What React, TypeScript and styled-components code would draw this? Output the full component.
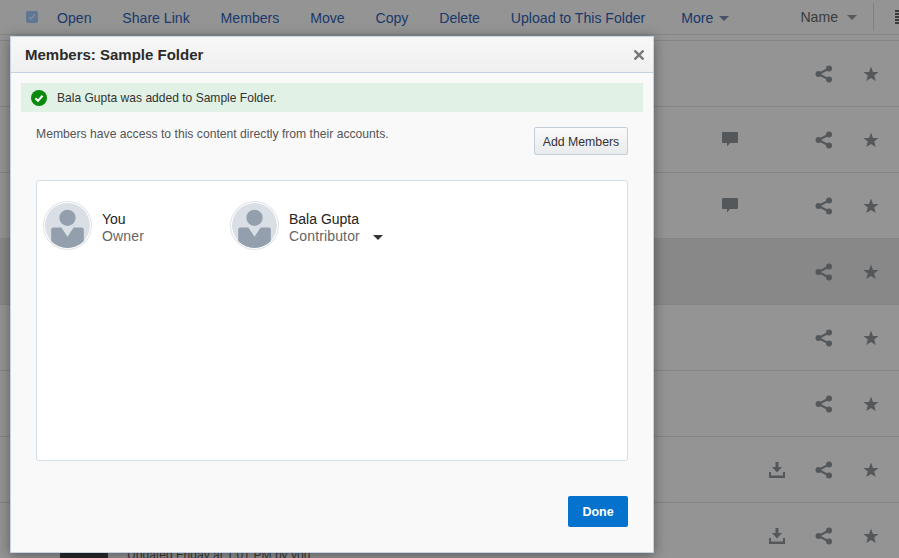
import React from 'react';
import styled, { createGlobalStyle } from 'styled-components';

const GlobalStyle = createGlobalStyle`
  html, body {
    margin: 0;
    padding: 0;
    height: 100%;
    overflow: hidden;
    background: #fff;
    font-family: "Liberation Sans", Arial, sans-serif;
  }
`;

const Page = styled.div`
  position: relative;
  width: 899px;
  height: 558px;
  overflow: hidden;
  background: #fff;
`;

const Toolbar = styled.div`
  display: flex;
  align-items: center;
  height: 35px;
  box-sizing: border-box;
  padding-left: 26px;
  border-bottom: 1px solid #e5e5e5;
  font-size: 14.1px;
`;

const Checkbox = styled.span`
  display: flex;
  align-items: center;
  justify-content: center;
  width: 12px;
  height: 12px;
  margin-right: 19px;
  border-radius: 2px;
  background: #a4ccff;
`;

const ToolLink = styled.a<{ $spaced?: boolean }>`
  display: flex;
  align-items: center;
  gap: 6px;
  margin-right: 30.85px;
  margin-left: ${({ $spaced }) => ($spaced ? '5px' : '0')};
  padding-top: 2px;
  color: #2f63b8;
  white-space: nowrap;
`;

const Caret = styled.span<{ $color?: string; $drop?: number }>`
  width: 0;
  height: 0;
  margin-top: ${({ $drop }) => $drop || 0}px;
  border-left: 5px solid transparent;
  border-right: 5px solid transparent;
  border-top: 5px solid ${({ $color }) => $color || '#7c90b8'};
`;

const Sort = styled.div`
  display: flex;
  align-items: center;
  gap: 9px;
  margin-left: auto;
  height: 28px;
  padding-right: 16px;
  border-right: 1px solid #dcdcdc;
  color: #666;
`;

const Dots = styled.div`
  display: flex;
  flex-direction: column;
  gap: 1px;
  margin-left: 21px;
`;

const Dot = styled.span`
  width: 4px;
  height: 2px;
  background: #666;
`;

const List = styled.div`
  margin-top: 5px;
  border-top: 1px solid #e5e5e5;
`;

const Row = styled.div<{ $active?: boolean }>`
  display: flex;
  align-items: center;
  height: 65px;
  padding-left: 60px;
  border-bottom: 1px solid #e5e5e5;
  background: ${({ $active }) => ($active ? '#ebebeb' : '#fff')};
`;

const Thumb = styled.div`
  width: 48px;
  height: 48px;
  margin: 9px 19px 0 0;
  background: #45494e;
`;

const Updated = styled.div`
  margin-top: 39px;
  font-size: 12.1px;
  line-height: 16px;
  color: #666;
  white-space: nowrap;
`;

const RowActions = styled.div`
  display: grid;
  grid-template-columns: repeat(4, 18px);
  column-gap: 29px;
  align-items: center;
  justify-items: center;
  margin-left: auto;
  margin-right: 19px;
`;

const IconSvg = styled.svg<{ $column: number }>`
  display: block;
  grid-column: ${({ $column }) => $column};
  fill: #92989d;
`;

const ShareIcon = () => (
  <IconSvg $column={3} width="18" height="18" viewBox="0 0 18 18">
    <circle cx="14" cy="3.5" r="3" />
    <circle cx="14" cy="14.5" r="3" />
    <circle cx="3.5" cy="9" r="3" />
    <path d="M3.5 9 14 3.5M3.5 9 14 14.5" stroke="#92989d" strokeWidth="2" fill="none" />
  </IconSvg>
);

const StarIcon = () => (
  <IconSvg $column={4} width="16" height="16" viewBox="0 0 16 16">
    <path d="M8 .6 10 5.9 15.6 6.1 11.2 9.6 12.7 15 8 11.9 3.3 15 4.8 9.6.4 6.1 6 5.9Z" />
  </IconSvg>
);

const CommentIcon = () => (
  <IconSvg $column={1} width="16" height="15" viewBox="0 0 16 15">
    <path d="M1 0h14a1 1 0 0 1 1 1v9a1 1 0 0 1-1 1H8l-3 3.5V11H1a1 1 0 0 1-1-1V1a1 1 0 0 1 1-1Z" />
  </IconSvg>
);

const DownloadIcon = () => (
  <IconSvg $column={2} width="16" height="16" viewBox="0 0 16 16">
    <path d="M6.5 0h3v5H13L8 10.5 3 5h3.5Z" />
    <path d="M0 10h2v3.5h12V10h2v6H0Z" />
  </IconSvg>
);

const Scrim = styled.div`
  position: absolute;
  inset: 0;
  background: rgba(0, 0, 0, 0.42);
`;

const Modal = styled.div`
  position: absolute;
  left: 10px;
  top: 36px;
  display: flex;
  flex-direction: column;
  width: 644px;
  height: 517px;
  box-sizing: border-box;
  border: 1px solid #c7d3e2;
  background: #f9f9f9;
  box-shadow: 0 2px 12px rgba(0, 0, 0, 0.4);
`;

const ModalHeader = styled.div`
  display: flex;
  align-items: center;
  justify-content: space-between;
  height: 36px;
  flex: none;
  box-sizing: border-box;
  padding: 0 9px 0 14px;
  border-bottom: 1px solid #c3d2e2;
  background: linear-gradient(#f7f7f7, #f0f0f0);
`;

const ModalTitle = styled.h1`
  margin: 0;
  font-size: 15px;
  font-weight: bold;
  color: #2b2b2b;
`;

const Close = styled.svg`
  display: block;
  stroke: #77797c;
  stroke-width: 2.4;
`;

const Banner = styled.div`
  display: flex;
  align-items: center;
  gap: 10px;
  height: 29px;
  margin: 10px 10px 0 10px;
  padding-left: 10px;
  background: #e1f1e5;
  font-size: 12.05px;
  color: #333;
`;

const Intro = styled.div`
  display: flex;
  justify-content: space-between;
  align-items: flex-start;
  margin: 15px 25px 0 25px;
  font-size: 12.17px;
  color: #555;
`;

const IntroText = styled.p`
  margin: 0;
  line-height: 14px;
`;

const AddButton = styled.button`
  width: 94px;
  height: 28px;
  padding: 2px 0 0;
  border: 1px solid #c4ced9;
  border-radius: 2px;
  background: linear-gradient(#fafafa, #e9eaec);
  font-family: inherit;
  font-size: 12.3px;
  color: #333;
`;

const MembersBox = styled.div`
  display: flex;
  align-items: flex-start;
  height: 281px;
  box-sizing: border-box;
  margin: 25px 25px 0 25px;
  padding: 20px 0 0 6px;
  border: 1px solid #d4deea;
  border-radius: 3px;
  background: #fff;
`;

const Member = styled.div`
  display: flex;
  align-items: center;
  gap: 10px;
  width: 187px;
`;

const Avatar = styled.svg`
  display: block;
  flex: none;
`;

const MemberInfo = styled.div`
  display: flex;
  flex-direction: column;
  margin-top: 4px;
  font-size: 14px;
  line-height: 17px;
`;

const MemberName = styled.span`
  color: #222;
`;

const MemberRole = styled.span`
  display: flex;
  align-items: center;
  gap: 13px;
  color: #666;
  letter-spacing: 0.15px;
`;

const Footer = styled.div`
  display: flex;
  justify-content: flex-end;
  margin: 35px 25px 0 0;
`;

const DoneButton = styled.button`
  width: 60px;
  height: 31px;
  padding: 0;
  border: none;
  border-radius: 2px;
  background: #0572ce;
  font-family: inherit;
  font-size: 12.5px;
  font-weight: bold;
  color: #fff;
`;

const MemberAvatar = () => (
  <Avatar width="49" height="49" viewBox="0 0 48 48">
    <defs>
      <clipPath id="avatar-clip">
        <circle cx="24" cy="24" r="22" />
      </clipPath>
    </defs>
    <circle cx="24" cy="24" r="23.5" fill="#fff" stroke="#dfe3e8" />
    <circle cx="24" cy="24" r="22" fill="#d9dfe5" />
    <g clipPath="url(#avatar-clip)" fill="#939fac">
      <circle cx="24" cy="16.5" r="8" />
      <path d="M8 28a2 2 0 0 1 2-2h8l6 9 6-9h8a2 2 0 0 1 2 2v20H8Z" />
    </g>
  </Avatar>
);

const rows = [
  { extra: null },
  { extra: 'comment' },
  { extra: 'comment' },
  { extra: null, active: true },
  { extra: null },
  { extra: null },
  { extra: 'download' },
  { extra: 'download', last: true },
];

const tools = ['Open', 'Share Link', 'Members', 'Move', 'Copy', 'Delete', 'Upload to This Folder'];

const App = () => (
  <Page>
    <GlobalStyle />
    <Toolbar>
      <Checkbox>
        <svg width="8" height="8" viewBox="0 0 8 8">
          <path d="M1 4l2 2 4-4.5" stroke="#e6eefa" strokeWidth="1.4" fill="none" />
        </svg>
      </Checkbox>
      {tools.map((tool) => (
        <ToolLink key={tool}>{tool}</ToolLink>
      ))}
      <ToolLink $spaced>
        More <Caret />
      </ToolLink>
      <Sort>
        Name <Caret $color="#999" />
      </Sort>
      <Dots>
        <Dot />
        <Dot />
        <Dot />
        <Dot />
        <Dot />
      </Dots>
    </Toolbar>
    <List>
      {rows.map((row, i) => (
        <Row key={i} $active={row.active}>
          {row.last && (
            <>
              <Thumb />
              <Updated>Updated Friday at 1:01 PM by you</Updated>
            </>
          )}
          <RowActions>
            {row.extra === 'comment' && <CommentIcon />}
            {row.extra === 'download' && <DownloadIcon />}
            <ShareIcon />
            <StarIcon />
          </RowActions>
        </Row>
      ))}
    </List>
    <Scrim />
    <Modal>
      <ModalHeader>
        <ModalTitle>Members: Sample Folder</ModalTitle>
        <Close width="10" height="10" viewBox="0 0 10 10">
          <path d="M.5.5l9 9M9.5.5l-9 9" />
        </Close>
      </ModalHeader>
      <Banner>
        <svg width="16" height="16" viewBox="0 0 16 16">
          <circle cx="8" cy="8" r="8" fill="#0a8a0a" />
          <path d="M4.4 8.2 7 10.7l4.6-5" stroke="#fff" strokeWidth="2" fill="none" />
        </svg>
        Bala Gupta was added to Sample Folder.
      </Banner>
      <Intro>
        <IntroText>Members have access to this content directly from their accounts.</IntroText>
        <AddButton>Add Members</AddButton>
      </Intro>
      <MembersBox>
        <Member>
          <MemberAvatar />
          <MemberInfo>
            <MemberName>You</MemberName>
            <MemberRole>Owner</MemberRole>
          </MemberInfo>
        </Member>
        <Member>
          <MemberAvatar />
          <MemberInfo>
            <MemberName>Bala Gupta</MemberName>
            <MemberRole>
              Contributor <Caret $color="#333" $drop={2} />
            </MemberRole>
          </MemberInfo>
        </Member>
      </MembersBox>
      <Footer>
        <DoneButton>Done</DoneButton>
      </Footer>
    </Modal>
  </Page>
);

export default App;
